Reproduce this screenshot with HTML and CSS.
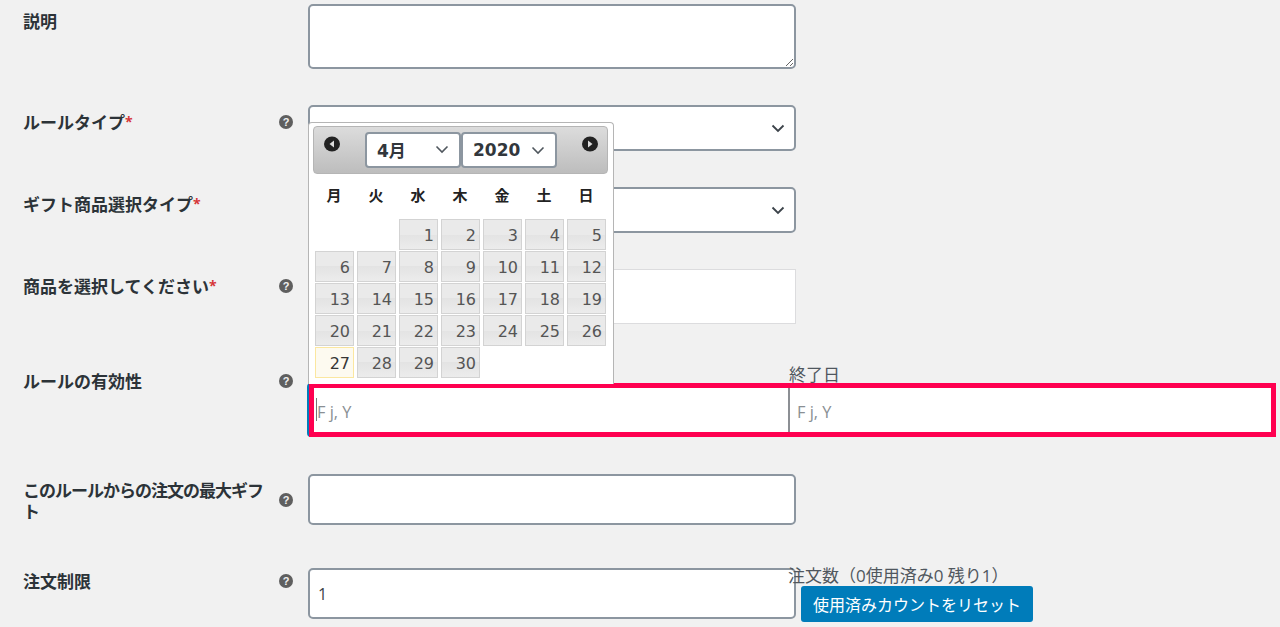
FILE: index.html
```html
<!DOCTYPE html>
<html lang="ja">
<head>
<meta charset="utf-8">
<title>ルール設定</title>
<link rel="stylesheet" href="styles.css">
</head>
<body>
<main class="form">
  <div class="row row-desc">
    <div class="label">説明</div>
    <div class="help-col"></div>
    <div class="field"><textarea class="box textarea"></textarea></div>
  </div>
  <div class="row row-select">
    <div class="label">ルールタイプ<span class="req">*</span></div>
    <div class="help-col"><span class="help">?</span></div>
    <div class="field"><div class="box select">
      <svg class="chev" width="14" height="9" viewBox="0 0 14 9"><path d="M1.5 1.5 7 7l5.5-5.5" fill="none" stroke="#3c434a" stroke-width="1.8"/></svg>
    </div></div>
  </div>
  <div class="row row-select">
    <div class="label">ギフト商品選択タイプ<span class="req">*</span></div>
    <div class="help-col"></div>
    <div class="field"><div class="box select">
      <svg class="chev" width="14" height="9" viewBox="0 0 14 9"><path d="M1.5 1.5 7 7l5.5-5.5" fill="none" stroke="#3c434a" stroke-width="1.8"/></svg>
    </div></div>
  </div>
  <div class="row row-product">
    <div class="label">商品を選択してください<span class="req">*</span></div>
    <div class="help-col"><span class="help">?</span></div>
    <div class="field"><div class="product"></div></div>
  </div>
  <div class="row row-date">
    <div class="label">ルールの有効性</div>
    <div class="help-col"><span class="help">?</span></div>
    <div class="dates">
      <div class="date-col date-start">
        <div class="date-label"></div>
        <div class="date-input start-input"><span class="caret"></span>F j, Y</div>
      </div>
      <div class="date-col date-end">
        <div class="date-label">終了日</div>
        <div class="date-input end-input">F j, Y</div>
      </div>
      <div class="highlight"></div>
      <div class="calendar">
        <div class="cal-head">
          <svg class="nav" width="16" height="16" viewBox="0 0 16 16"><ellipse cx="8" cy="8" rx="8" ry="7.5" fill="#222"/><path d="M10 4.5v7L5.5 8z" fill="#ddd"/></svg>
          <div class="cal-selects">
            <div class="cal-select month">4月<svg width="14" height="9" viewBox="0 0 14 9"><path d="M1.5 1.5 7 7l5.5-5.5" fill="none" stroke="#50575e" stroke-width="1.6"/></svg></div>
            <div class="cal-select year">2020<svg width="14" height="9" viewBox="0 0 14 9"><path d="M1.5 1.5 7 7l5.5-5.5" fill="none" stroke="#50575e" stroke-width="1.6"/></svg></div>
          </div>
          <svg class="nav" width="16" height="16" viewBox="0 0 16 16"><ellipse cx="8" cy="8" rx="8" ry="7.5" fill="#222"/><path d="M6 4.5v7L10.5 8z" fill="#ddd"/></svg>
        </div>
        <div class="weekdays"><span>月</span><span>火</span><span>水</span><span>木</span><span>金</span><span>土</span><span>日</span></div>
        <div class="days">
          <span class="blank"></span><span class="blank"></span><a>1</a><a>2</a><a>3</a><a>4</a><a>5</a>
          <a>6</a><a>7</a><a>8</a><a>9</a><a>10</a><a>11</a><a>12</a>
          <a>13</a><a>14</a><a>15</a><a>16</a><a>17</a><a>18</a><a>19</a>
          <a>20</a><a>21</a><a>22</a><a>23</a><a>24</a><a>25</a><a>26</a>
          <a class="today">27</a><a>28</a><a>29</a><a>30</a>
        </div>
      </div>
    </div>
  </div>
  <div class="row row-max">
    <div class="label label-wrap">このルールからの注文の最大ギフト</div>
    <div class="help-col help-mid"><span class="help">?</span></div>
    <div class="field"><div class="box input"></div></div>
  </div>
  <div class="row row-limit">
    <div class="label label-top">注文制限</div>
    <div class="help-col help-top"><span class="help">?</span></div>
    <div class="field"><div class="box input value">1</div></div>
    <div class="usage">
      <div class="usage-text">注文数（0使用済み0 残り1）</div>
      <button class="reset" type="button">使用済みカウントをリセット</button>
    </div>
  </div>
</main>
</body>
</html>
```
FILE: styles.css
```css
* { box-sizing: border-box; }
html, body { margin: 0; height: 627px; overflow: hidden; }
body {
  background: #f1f1f1;
  color: #3c434a;
  font-family: "Open Sans", "Noto Sans CJK JP", sans-serif;
  font-size: 17px;
}
.form { padding-top: 4px; }
.row { display: flex; align-items: flex-start; padding-left: 23px; }
.row-desc { margin-bottom: 36px; }
.row-select { margin-bottom: 36px; }
.row-product { margin-bottom: 40px; }
.row-date { margin-bottom: 37px; }
.row-max { margin-bottom: 43px; height: 51px; }

.label {
  width: 256px;
  padding-top: 7px;
  font-weight: 700;
  line-height: 21px;
  font-size: 17px;
  color: #2c3338;
  flex: none;
}
.label-wrap { padding-top: 6px; padding-right: 6px; letter-spacing: -1px; }
.label-top { padding-top: 3px; }
.req { color: #d63638; font-weight: 700; font-size: 14px; line-height: 0; vertical-align: 2px; }
.help-col { width: 29px; flex: none; padding-top: 10px; }
.help-mid { padding-top: 19px; }
.help-top { padding-top: 6px; }
.help {
  display: block;
  width: 14px;
  height: 14px;
  border-radius: 50%;
  background: #5f5f5f;
  color: #f1f1f1;
  font: 700 11px/14px "Liberation Sans", sans-serif;
  text-align: center;
}
.field { width: 488px; flex: none; }
.box {
  display: block;
  width: 100%;
  background: #fff;
  border: 2px solid #8c96a0;
  border-radius: 5px;
}
.textarea { height: 65px; margin: 0; resize: vertical; }
.select { height: 46px; display: flex; align-items: center; justify-content: flex-end; padding-right: 9px; }
.product { height: 55px; background: #fff; border: 1px solid #dcdcde; }
.input { height: 51px; }
.value { padding: 13px 8px; font-size: 16px; line-height: 22px; color: #3c434a; }

.dates { position: relative; display: flex; width: 968px; flex: none; }
.date-col { display: flex; flex-direction: column; }
.date-start { width: 481px; }
.date-end { width: 487px; }
.date-label { height: 19px; line-height: 22px; font-size: 17px; color: #50575e; white-space: nowrap; }
.date-input {
  height: 54px;
  background: #fff;
  color: #8a8f94;
  font-size: 16.4px;
  line-height: 58px;
  position: relative;
}
.start-input { margin-left: -1px; padding-left: 7px; border-left: 3px solid #007cba; border-radius: 4px 0 0 4px; }
.end-input { padding-left: 7px; border-left: 2px solid #8c8f94; margin-left: -1px; }
.caret { position: absolute; left: 6px; top: 15px; width: 1px; height: 23px; background: #777; }
.highlight {
  position: absolute;
  left: 1px;
  right: 0;
  top: 19px;
  height: 54px;
  border: 5px solid #ff0050;
  pointer-events: none;
}

.calendar {
  position: absolute;
  left: 0;
  bottom: 53px;
  width: 306px;
  height: 262px;
  background: #fff;
  border: 1px solid #b5b5b5;
  border-bottom: 0;
  border-radius: 4px 4px 0 0;
  padding: 3px 5px 0 4px;
  font-family: "DejaVu Sans", "Noto Sans CJK JP", sans-serif;
}
.cal-head {
  height: 48px;
  display: flex;
  justify-content: space-between;
  align-items: flex-start;
  padding: 5px 9px 0 10px;
  background: linear-gradient(#dcdcdc, #bdbdbd);
  border: 1px solid #b5b5b5;
  border-radius: 4px;
}
.nav { margin-top: 4px; flex: none; }
.cal-selects { display: flex; }
.cal-select {
  height: 36px;
  width: 96px;
  display: flex;
  align-items: center;
  justify-content: space-between;
  padding: 0 10px;
  background: #fff;
  border: 2px solid #8c96a0;
  border-radius: 4px;
  font-weight: 700;
  font-size: 17px;
  color: #32373c;
}
.month { padding-bottom: 2px; }
.weekdays {
  display: grid;
  grid-template-columns: repeat(7, 42px);
  margin-top: 12px;
  height: 20px;
  text-align: center;
  font-weight: 700;
  font-size: 15px;
  line-height: 20px;
  color: #222;
}
.days {
  display: grid;
  grid-template-columns: repeat(7, 39px);
  grid-auto-rows: 31px;
  column-gap: 3px;
  row-gap: 1px;
  margin: 13px 0 0 2px;
}
.days a {
  display: block;
  border: 1px solid #d3d3d3;
  background: linear-gradient(#eaeaea 50%, #e3e3e3 50%, #ececec);
  color: #555;
  font-size: 16px;
  line-height: 31px;
  text-align: right;
  padding-right: 3px;
}
.days a.today {
  border-color: #fbe7a0;
  background: #fdfaf0;
  color: #363636;
}

.usage { margin: -3px 0 0 -8px; flex: none; position: relative; }
.usage-text { font-size: 17px; line-height: 21px; color: #50575e; white-space: nowrap; }
.reset {
  display: block;
  margin: 0 0 0 13px;
  width: 232px;
  height: 36px;
  background: #007cba;
  border: 0;
  border-radius: 3px;
  color: #fff;
  font: 400 16px "Open Sans", "Noto Sans CJK JP", sans-serif;
  white-space: nowrap;
  padding: 0;
}
```
